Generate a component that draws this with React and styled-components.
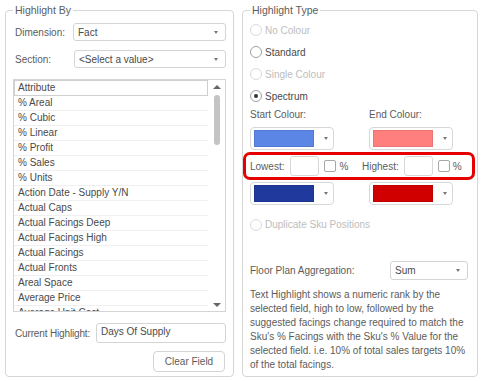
import React from 'react';
import styled, { createGlobalStyle } from 'styled-components';

const Global = createGlobalStyle`
  html, body { margin: 0; padding: 0; background: #fff; }
  body {
    font-family: "Liberation Sans", Arial, sans-serif;
    font-size: 10px;
    color: #5c5c5c;
  }
  * { box-sizing: border-box; }
`;

const Page = styled.div`
  display: flex;
  gap: 8px;
  padding: 4px 0 0 5px;
  width: 484px;
  height: 381px;
`;

const Fieldset = styled.fieldset`
  margin: 0;
  min-width: 0;
  width: ${p => p.$w}px;
  height: 373px;
  border: 1px solid #d6d6d6;
  border-radius: 4px;
  padding: 0 ${p => p.$pr}px 4px ${p => p.$pl}px;
  display: flex;
  flex-direction: column;
`;

const Legend = styled.legend`
  font-size: 10.5px;
  line-height: 13px;
  padding: 0 2px;
  color: #5c5c5c;
`;

const FieldRow = styled.div`
  display: flex;
  align-items: center;
  margin-top: ${p => p.$mt}px;
  padding-left: ${p => (p.$flush ? 0 : 2)}px;
`;

const Label = styled.span`
  width: ${p => (p.$w ? `${p.$w}px` : 'auto')};
  flex: none;
  color: ${p => (p.$disabled ? '#bbb' : '#5c5c5c')};
  white-space: nowrap;
  letter-spacing: ${p => (p.$tight ? '-0.15px' : 'normal')};
`;

const Select = styled.div`
  flex: ${p => (p.$w ? 'none' : '1')};
  width: ${p => (p.$w ? `${p.$w}px` : 'auto')};
  height: ${p => p.$h || 18}px;
  border: 1px solid #d4d4d4;
  border-radius: 3px;
  display: flex;
  align-items: center;
  justify-content: space-between;
  padding: 0 7px 0 4px;
  color: #4a4a4a;
  background: #fff;
`;

const Caret = styled.span`
  width: 0;
  height: 0;
  border-left: 2.5px solid transparent;
  border-right: 2.5px solid transparent;
  border-top: 3px solid #777;
`;

const ListBox = styled.div`
  margin-top: 11px;
  height: 236px;
  border: 1px solid #d4d4d4;
  display: flex;
  overflow: hidden;
`;

const Items = styled.div`
  flex: 1;
  overflow: hidden;
`;

const Item = styled.div`
  line-height: 14px;
  color: #4a4a4a;
  white-space: nowrap;
  height: ${p => (p.$focused ? 16 : 15)}px;
  padding-left: ${p => (p.$focused ? 3 : 4)}px;
  border: ${p => (p.$focused ? '1px solid #cfcfcf' : 'none')};
  border-bottom: 1px solid ${p => (p.$focused ? '#cfcfcf' : '#efefef')};
`;

const ScrollTrack = styled.div`
  width: 17px;
  flex: none;
  display: flex;
  flex-direction: column;
  align-items: center;
  padding: 5px 0 4px;
`;

const ArrowUp = styled.span`
  width: 0;
  height: 0;
  border-left: 4px solid transparent;
  border-right: 4px solid transparent;
  border-bottom: 4px solid #666;
`;

const ArrowDown = styled.span`
  width: 0;
  height: 0;
  border-left: 4px solid transparent;
  border-right: 4px solid transparent;
  border-top: 4px solid #666;
`;

const Thumb = styled.div`
  width: 6px;
  height: 50px;
  margin-top: 6px;
  border-radius: 3px;
  background: #c4c4c4;
`;

const Spacer = styled.div`
  flex: 1;
`;

const TextInput = styled.div`
  flex: 1;
  height: 20px;
  border: 1px solid #d4d4d4;
  border-radius: 3px;
  padding: 2px 4px;
  color: #4a4a4a;
`;

const ButtonRow = styled.div`
  display: flex;
  justify-content: flex-end;
  margin-top: 8px;
  padding-right: 1px;
`;

const Button = styled.div`
  width: 72px;
  height: 21px;
  border: 1px solid #d4d4d4;
  border-radius: 4px;
  display: flex;
  align-items: center;
  justify-content: center;
  color: #5c5c5c;
  background: #fff;
`;

/* right side */
const Radios = styled.div`
  margin-top: 2px;
  display: flex;
  flex-direction: column;
`;

const RadioRow = styled.div`
  height: 22px;
  display: flex;
  align-items: center;
  gap: 3px;
  margin-top: ${p => p.$mt || 0}px;
  color: ${p => (p.$disabled ? '#bdbdbd' : '#4a4a4a')};
`;

const RadioCircle = styled.span`
  width: 12px;
  height: 12px;
  flex: none;
  border-radius: 50%;
  border: 1px solid ${p => (p.$disabled ? '#dadada' : '#a0a0a0')};
  display: flex;
  align-items: center;
  justify-content: center;
  &::after {
    content: '';
    display: ${p => (p.$checked ? 'block' : 'none')};
    width: 4px;
    height: 4px;
    border-radius: 50%;
    background: #333;
  }
`;

const Pair = styled.div`
  display: grid;
  grid-template-columns: 119px 1fr;
  align-items: center;
  margin-top: ${p => p.$mt || 0}px;
  height: ${p => (p.$h ? `${p.$h}px` : 'auto')};
`;

const ColourSelect = styled.div`
  width: 84px;
  height: 23px;
  border: 1px solid #d8d8d8;
  border-radius: 4px;
  display: flex;
  align-items: center;
  padding: 0 7px 0 3px;
  gap: 10px;
  background: #fff;
`;

const Swatch = styled.span`
  width: 60px;
  height: 17px;
  flex: none;
  background: ${p => p.$c};
  border: 1px solid rgba(0, 0, 0, 0.08);
`;

const Highlight = styled.div`
  margin: 2px -7px 0;
  height: 29px;
  border: 3px solid #e60000;
  border-radius: 7px;
  display: flex;
  align-items: center;
  padding-left: 4px;
`;

const RangeGroup = styled.div`
  display: flex;
  align-items: center;
  width: ${p => (p.$w ? `${p.$w}px` : 'auto')};
  flex: none;
`;

const SmallInput = styled.span`
  width: 29px;
  height: 20px;
  border: 1px solid #d8d8d8;
  border-radius: 3px;
  margin-left: ${p => p.$ml}px;
  flex: none;
`;

const Check = styled.span`
  width: 12px;
  height: 12px;
  border: 1px solid #a8a8a8;
  border-radius: 2px;
  margin: 0 3px 0 5px;
  flex: none;
`;

const Para = styled.p`
  margin: 8px 0 0;
  line-height: 14px;
  color: #5c5c5c;
`;

const items = [
  '% Areal', '% Cubic', '% Linear', '% Profit', '% Sales', '% Units',
  'Action Date - Supply Y/N', 'Actual Caps', 'Actual Facings Deep',
  'Actual Facings High', 'Actual Facings', 'Actual Fronts', 'Areal Space',
  'Average Price', 'Average Unit Cost',
];

export default function App() {
  return (
    <>
      <Global />
      <Page>
        <Fieldset $w={229} $pl={7} $pr={7}>
          <Legend>Highlight By</Legend>
          <FieldRow $mt={6}>
            <Label $w={58}>Dimension:</Label>
            <Select>Fact<Caret /></Select>
          </FieldRow>
          <FieldRow $mt={9}>
            <Label $w={59}>Section:</Label>
            <Select>&lt;Select a value&gt;<Caret /></Select>
          </FieldRow>
          <ListBox>
            <Items>
              <Item $focused>Attribute</Item>
              {items.map(t => <Item key={t}>{t}</Item>)}
            </Items>
            <ScrollTrack>
              <ArrowUp />
              <Thumb />
              <Spacer />
              <ArrowDown />
            </ScrollTrack>
          </ListBox>
          <FieldRow $mt={11}>
            <Label $w={81} $tight>Current Highlight:</Label>
            <TextInput>Days Of Supply</TextInput>
          </FieldRow>
          <ButtonRow>
            <Button>Clear Field</Button>
          </ButtonRow>
        </Fieldset>

        <Fieldset $w={236} $pl={7} $pr={9}>
          <Legend>Highlight Type</Legend>
          <Radios>
            <RadioRow $disabled><RadioCircle $disabled />No Colour</RadioRow>
            <RadioRow><RadioCircle />Standard</RadioRow>
            <RadioRow $disabled><RadioCircle $disabled />Single Colour</RadioRow>
            <RadioRow><RadioCircle $checked />Spectrum</RadioRow>
          </Radios>
          <Pair $h={16}>
            <Label>Start Colour:</Label>
            <Label>End Colour:</Label>
          </Pair>
          <Pair $mt={5}>
            <ColourSelect><Swatch $c="#5b86e5" /><Caret /></ColourSelect>
            <ColourSelect><Swatch $c="#ff7f7f" /><Caret /></ColourSelect>
          </Pair>
          <Highlight>
            <RangeGroup $w={112}>
              <Label>Lowest:</Label>
              <SmallInput $ml={6} />
              <Check />%
            </RangeGroup>
            <RangeGroup>
              <Label>Highest:</Label>
              <SmallInput $ml={5} />
              <Check />%
            </RangeGroup>
          </Highlight>
          <Pair $mt={2}>
            <ColourSelect><Swatch $c="#1f3a9c" /><Caret /></ColourSelect>
            <ColourSelect><Swatch $c="#d00000" /><Caret /></ColourSelect>
          </Pair>
          <RadioRow $disabled $mt={9}><RadioCircle $disabled />Duplicate Sku Positions</RadioRow>
          <FieldRow $mt={26} $flush>
            <Label $w={140}>Floor Plan Aggregation:</Label>
            <Select $w={78} $h={19}>Sum<Caret /></Select>
          </FieldRow>
          <Para>
            Text Highlight shows a numeric rank by the<br />
            selected field, high to low, followed by the<br />
            suggested facings change required to match the<br />
            Sku's % Facings with the Sku's % Value for the<br />
            selected field. i.e. 10% of total sales targets 10%<br />
            of the total facings.
          </Para>
        </Fieldset>
      </Page>
    </>
  );
}
